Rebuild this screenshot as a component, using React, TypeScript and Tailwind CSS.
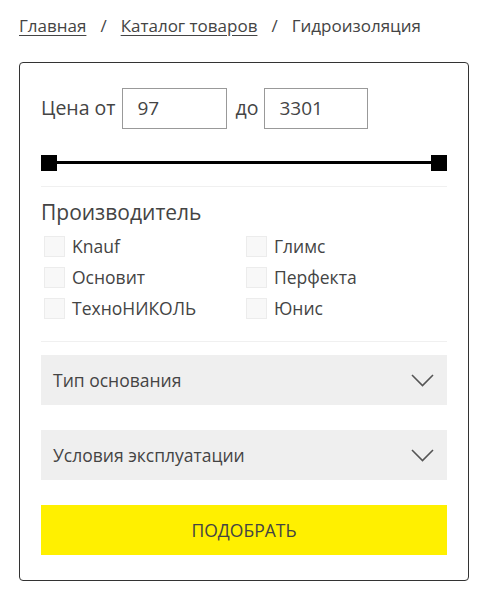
import { useState } from 'react';

const brands = [
  ['Knauf', 'Глимс'],
  ['Основит', 'Перфекта'],
  ['ТехноНИКОЛЬ', 'Юнис'],
];

function Chevron() {
  return (
    <svg width="23" height="13" viewBox="0 0 23 13" fill="none">
      <path d="M1 1l10.5 10.5L22 1" stroke="#555" strokeWidth="1.6" />
    </svg>
  );
}

function Check({ label }: { label: string }) {
  const [on, setOn] = useState(false);
  return (
    <label className="flex items-center h-[31px] cursor-pointer">
      <span
        onClick={() => setOn(!on)}
        className={`w-[21px] h-[21px] ml-[3px] border border-[#ececec] ${on ? 'bg-[#ffed00]' : 'bg-[#f8f8f8]'}`}
      />
      <span className="ml-[7px] text-[17.5px] text-[#444]">{label}</span>
    </label>
  );
}

// Filter sidebar for catalog page
export default function App() {
  const [from, setFrom] = useState('97');
  const [to, setTo] = useState('3301');

  return (
    <div className="bg-white min-h-[600px] pt-[13px] font-['Open_Sans',sans-serif] text-[#444]">
      <div className="pl-[19px] text-[17px] text-[#444] flex items-center gap-[14px]">
        <a href="#" className="underline underline-offset-[3px]">Главная</a>
        <span>/</span>
        <a href="#" className="underline underline-offset-[3px]">Каталог товаров</a>
        <span>/</span>
        <span>Гидроизоляция</span>
      </div>

      <div className="mt-[23px] ml-[19px] w-[450px] border border-[#333] rounded-[4px] px-[21px] pt-[25px] pb-[25px]">
        <div className="flex items-center text-[19.5px] text-[#444]">
          <span>Цена от</span>
          <input
            value={from}
            onChange={e => setFrom(e.target.value)}
            className="ml-[7px] w-[105px] h-[41px] border border-[#999] px-[14px] text-[19px] text-[#444] outline-none"
          />
          <span className="ml-[8px]">до</span>
          <input
            value={to}
            onChange={e => setTo(e.target.value)}
            className="ml-[6px] w-[104px] h-[41px] border border-[#999] px-[14px] text-[19px] text-[#444] outline-none"
          />
        </div>

        <div className="mt-[26px] flex items-center">
          <span className="w-[16px] h-[16px] bg-black" />
          <span className="flex-1 h-[3px] bg-black" />
          <span className="w-[16px] h-[16px] bg-black" />
        </div>

        <div className="mt-[15px] h-px bg-[#f0f0f0]" />

        <div className="mt-[10px] text-[21px] text-[#444]">Производитель</div>
        <div className="mt-[3px] grid grid-cols-[202px_1fr]">
          {brands.map(([a, b]) => (
            <div key={a} className="contents">
              <Check label={a} />
              <Check label={b} />
            </div>
          ))}
        </div>

        <div className="mt-[17px] h-px bg-[#f0f0f0]" />

        <button className="mt-[13px] w-full h-[50px] bg-[#efefef] flex items-center justify-between pl-[12px] pr-[13px] text-[17.5px] text-[#444]">
          <span>Тип основания</span>
          <Chevron />
        </button>
        <button className="mt-[25px] w-full h-[50px] bg-[#efefef] flex items-center justify-between pl-[12px] pr-[13px] text-[17.5px] text-[#444]">
          <span>Условия эксплуатации</span>
          <Chevron />
        </button>

        <button className="mt-[25px] w-full h-[50px] bg-[#fff000] text-[17.5px] text-[#444]">
          ПОДОБРАТЬ
        </button>
      </div>
    </div>
  );
}
